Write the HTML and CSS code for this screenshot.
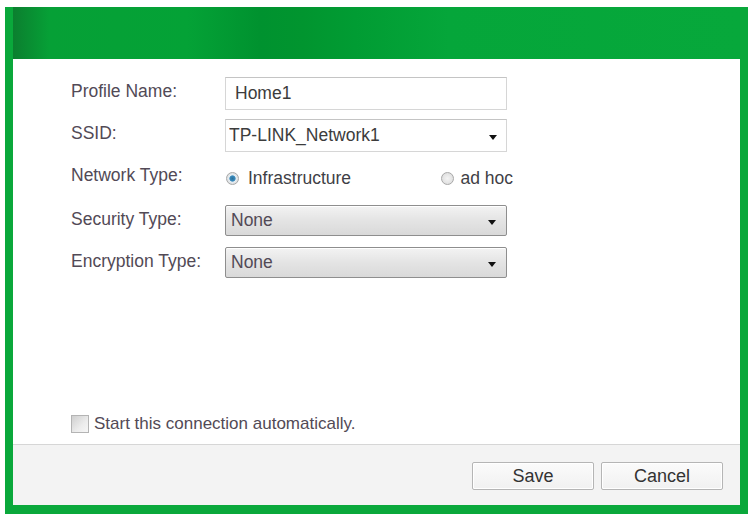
FILE: index.html
```html
<!DOCTYPE html>
<html lang="en">
<head>
    <meta charset="UTF-8">
    <meta name="viewport" content="width=device-width, initial-scale=1.0">
    <title>Profile</title>
    <link rel="stylesheet" href="styles.css">
</head>
<body>
    <div class="window">
        <div class="titlebar"></div>

        <div class="panel">
            <form class="profile-form">
                <div class="fields">
                    <label class="field-label" for="profileName">Profile Name:</label>
                    <input class="text-box" type="text" id="profileName" value="Home1">

                    <label class="field-label" for="ssid">SSID:</label>
                    <div class="combo">
                        <input class="text-box" type="text" id="ssid" value="TP-LINK_Network1">
                    </div>

                    <span class="field-label">Network Type:</span>
                    <div class="radio-row">
                        <label class="radio"><input type="radio" name="netType" checked> Infrastructure</label>
                        <label class="radio"><input type="radio" name="netType"> ad hoc</label>
                    </div>

                    <label class="field-label" for="securityType">Security Type:</label>
                    <div class="dropdown" id="securityType">None</div>

                    <label class="field-label" for="encryptionType">Encryption Type:</label>
                    <div class="dropdown" id="encryptionType">None</div>
                </div>

                <label class="auto-start">
                    <input type="checkbox">
                    Start this connection automatically.
                </label>
            </form>

            <div class="footer">
                <button type="button" class="btn">Save</button>
                <button type="button" class="btn">Cancel</button>
            </div>
        </div>
    </div>
</body>
</html>
```

FILE: styles.css
```css
body {
    margin: 0;
    background-color: #fff;
    font-family: "Liberation Sans", Arial, sans-serif;
    font-size: 17.5px;
    color: #524a56;
}

.window {
    width: 743px;
    margin: 7px 0 0 5px;
    padding: 0 8px 9px 8px;
    box-sizing: border-box;
    background-color: #0aa83b;
}

.titlebar {
    height: 52px;
    background: linear-gradient(90deg, #0b7f2f 0%, #06a036 5%, #04a236 24%, #00922f 34%, #01952f 40%, #019c33 47%, #05a63a 60%, #07a83b 100%);
}

.panel {
    height: 446px;
    background-color: #fff;
    display: flex;
    flex-direction: column;
}

.profile-form {
    flex: 1;
    display: flex;
    flex-direction: column;
    padding: 18px 0 10px 58px;
}

.fields {
    display: grid;
    grid-template-columns: 154px 282px;
    grid-template-rows: 33px 33px 35px 33px 31px;
    row-gap: 9px;
}

.field-label {
    padding-top: 4px;
    line-height: 20px;
}

.text-box {
    width: 100%;
    height: 33px;
    box-sizing: border-box;
    margin: 0;
    padding: 0 9px;
    border: 1px solid #d6d6d6;
    border-top-color: #c4c4c4;
    background-color: #fff;
    font: inherit;
    color: #3c3c3c;
    outline: none;
}

.combo {
    position: relative;
}

.combo .text-box {
    padding-left: 3px;
}

/* the little black arrow on combo boxes */
.combo::after, .dropdown::after {
    content: "";
    position: absolute;
    right: 10px;
    top: 50%;
    margin-top: -1px;
    border-left: 4px solid transparent;
    border-right: 4px solid transparent;
    border-top: 5px solid #111;
}

.radio-row {
    display: flex;
    justify-content: space-between;
    align-items: center;
    color: #3f3f46;
}

.radio {
    display: flex;
    align-items: center;
    gap: 9px;
}

.radio input {
    appearance: none;
    width: 13px;
    height: 13px;
    margin: 0 0 0 1px;
    border: 1px solid #a8a8a8;
    border-radius: 50%;
    background: radial-gradient(circle, #f4f4f4 0%, #d8d8d8 100%);
}

.radio input:checked {
    background: radial-gradient(circle, #2a6f9a 0%, #3a8bbd 35%, #e8eef2 45%, #cfcfcf 100%);
}

.radio:last-child {
    gap: 6px;
    margin-right: -6px;
}

.dropdown {
    position: relative;
    height: 31px;
    box-sizing: border-box;
    padding: 0 5px;
    line-height: 29px;
    border: 1px solid #8e8e8e;
    border-radius: 2px;
    background: linear-gradient(#f3f3f3, #e4e4e4 50%, #d9d9d9);
    box-shadow: inset 0 1px 0 #fff;
    color: #524a56;
}

.auto-start {
    margin-top: auto;
    display: flex;
    align-items: center;
    gap: 5px;
    font-size: 17px;
    color: #524a56;
}

.auto-start input {
    appearance: none;
    width: 18px;
    height: 18px;
    margin: 0;
    border: 1px solid #b4b4b4;
    background: linear-gradient(135deg, #cfcfcf, #ececec 60%, #f6f6f6);
}

.footer {
    height: 61px;
    box-sizing: border-box;
    border-top: 1px solid #d6d6d6;
    background-color: #f3f3f3;
    display: flex;
    justify-content: flex-end;
    align-items: flex-start;
    gap: 7px;
    padding: 17px 17px 0 0;
}

.btn {
    width: 122px;
    height: 28px;
    margin: 0;
    border: 1px solid #b5b5b5;
    border-radius: 2px;
    background: linear-gradient(#fbfbfb, #f1f1f1);
    box-shadow: inset 0 0 0 1px #fff;
    font-family: inherit;
    font-size: 18px;
    color: #333;
    cursor: pointer;
}
```
